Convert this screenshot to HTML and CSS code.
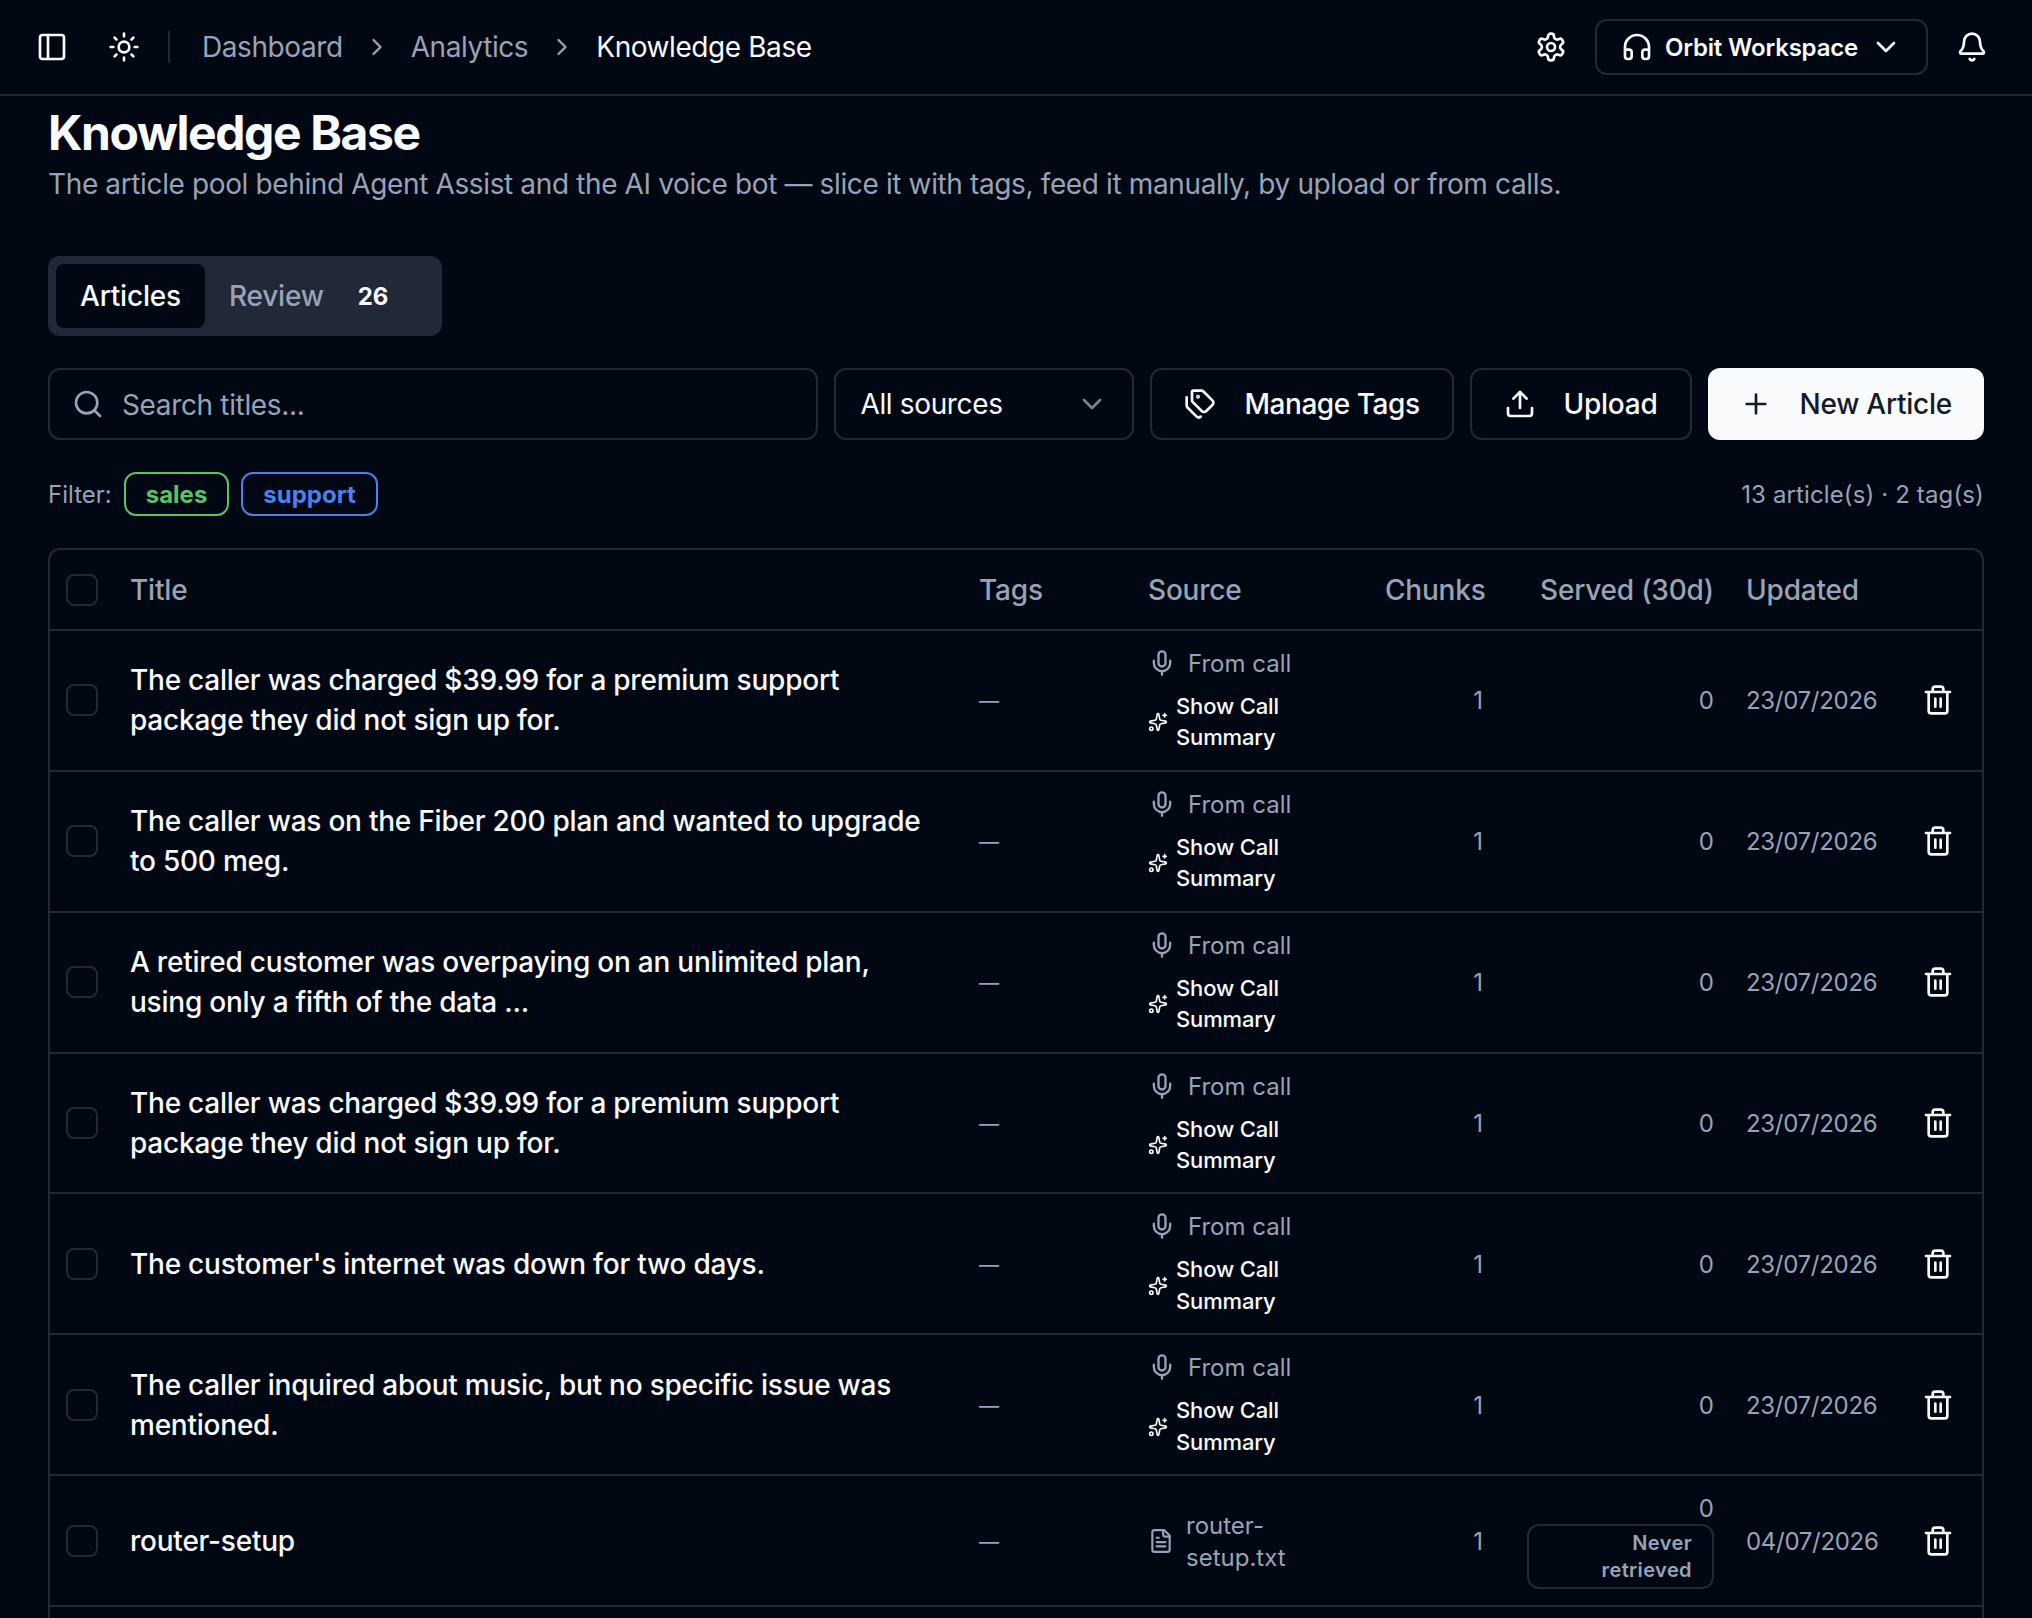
FILE: index.html
```html
<!DOCTYPE html>
<html lang="en">
<head>
    <meta charset="UTF-8">
    <meta name="viewport" content="width=device-width, initial-scale=1.0">
    <title>Knowledge Base</title>
    <link rel="stylesheet" href="styles.css">
</head>
<body>
    <!-- Icon set -->
    <svg class="icon-defs" aria-hidden="true">
        <symbol id="i-panel" viewBox="0 0 24 24"><rect width="18" height="18" x="3" y="3" rx="2"/><path d="M9 3v18"/></symbol>
        <symbol id="i-sun" viewBox="0 0 24 24"><circle cx="12" cy="12" r="4"/><path d="M12 2v2M12 20v2M4.93 4.93l1.41 1.41M17.66 17.66l1.41 1.41M2 12h2M20 12h2M6.34 17.66l-1.41 1.41M19.07 4.93l-1.41 1.41"/></symbol>
        <symbol id="i-chevron-right" viewBox="0 0 24 24"><path d="m9 18 6-6-6-6"/></symbol>
        <symbol id="i-chevron-down" viewBox="0 0 24 24"><path d="m6 9 6 6 6-6"/></symbol>
        <symbol id="i-settings" viewBox="0 0 24 24"><path d="M12.22 2h-.44a2 2 0 0 0-2 2v.18a2 2 0 0 1-1 1.73l-.43.25a2 2 0 0 1-2 0l-.15-.08a2 2 0 0 0-2.73.73l-.22.38a2 2 0 0 0 .73 2.73l.15.1a2 2 0 0 1 1 1.72v.51a2 2 0 0 1-1 1.74l-.15.09a2 2 0 0 0-.73 2.73l.22.38a2 2 0 0 0 2.73.73l.15-.08a2 2 0 0 1 2 0l.43.25a2 2 0 0 1 1 1.73V20a2 2 0 0 0 2 2h.44a2 2 0 0 0 2-2v-.18a2 2 0 0 1 1-1.73l.43-.25a2 2 0 0 1 2 0l.15.08a2 2 0 0 0 2.73-.73l.22-.39a2 2 0 0 0-.73-2.73l-.15-.08a2 2 0 0 1-1-1.74v-.5a2 2 0 0 1 1-1.74l.15-.09a2 2 0 0 0 .73-2.73l-.22-.38a2 2 0 0 0-2.73-.73l-.15.08a2 2 0 0 1-2 0l-.43-.25a2 2 0 0 1-1-1.73V4a2 2 0 0 0-2-2z"/><circle cx="12" cy="12" r="3"/></symbol>
        <symbol id="i-headphones" viewBox="0 0 24 24"><path d="M3 14h3a2 2 0 0 1 2 2v3a2 2 0 0 1-2 2H5a2 2 0 0 1-2-2v-7a9 9 0 0 1 18 0v7a2 2 0 0 1-2 2h-1a2 2 0 0 1-2-2v-3a2 2 0 0 1 2-2h3"/></symbol>
        <symbol id="i-bell" viewBox="0 0 24 24"><path d="M10.268 21a2 2 0 0 0 3.464 0"/><path d="M3.262 15.326A1 1 0 0 0 4 17h16a1 1 0 0 0 .74-1.673C19.41 13.956 18 12.499 18 8A6 6 0 0 0 6 8c0 4.499-1.411 5.956-2.738 7.326"/></symbol>
        <symbol id="i-search" viewBox="0 0 24 24"><circle cx="11" cy="11" r="8"/><path d="m21 21-4.3-4.3"/></symbol>
        <symbol id="i-tags" viewBox="0 0 24 24"><path d="M13.172 2a2 2 0 0 1 1.414.586l6.71 6.71a2.4 2.4 0 0 1 0 3.408l-4.592 4.592a2.4 2.4 0 0 1-3.408 0l-6.71-6.71A2 2 0 0 1 6 9.172V3a1 1 0 0 1 1-1z"/><path d="M2 7v6.172a2 2 0 0 0 .586 1.414l6.71 6.71a2.4 2.4 0 0 0 3.191.193"/><circle cx="10.5" cy="6.5" r=".5" fill="currentColor"/></symbol>
        <symbol id="i-upload" viewBox="0 0 24 24"><path d="M21 15v4a2 2 0 0 1-2 2H5a2 2 0 0 1-2-2v-4"/><path d="m17 8-5-5-5 5"/><path d="M12 3v12"/></symbol>
        <symbol id="i-plus" viewBox="0 0 24 24"><path d="M5 12h14M12 5v14"/></symbol>
        <symbol id="i-mic" viewBox="0 0 24 24"><path d="M12 2a3 3 0 0 0-3 3v7a3 3 0 0 0 6 0V5a3 3 0 0 0-3-3Z"/><path d="M19 10v2a7 7 0 0 1-14 0v-2"/><path d="M12 19v3"/></symbol>
        <symbol id="i-sparkles" viewBox="0 0 24 24"><path d="M11.017 2.814a1 1 0 0 1 1.966 0l1.051 5.558a2 2 0 0 0 1.594 1.594l5.558 1.051a1 1 0 0 1 0 1.966l-5.558 1.051a2 2 0 0 0-1.594 1.594l-1.051 5.558a1 1 0 0 1-1.966 0l-1.051-5.558a2 2 0 0 0-1.594-1.594l-5.558-1.051a1 1 0 0 1 0-1.966l5.558-1.051a2 2 0 0 0 1.594-1.594z"/><path d="M20 2v4M22 4h-4"/><circle cx="4" cy="20" r="2"/></symbol>
        <symbol id="i-file" viewBox="0 0 24 24"><path d="M15 2H6a2 2 0 0 0-2 2v16a2 2 0 0 0 2 2h12a2 2 0 0 0 2-2V7Z"/><path d="M14 2v4a2 2 0 0 0 2 2h4M10 9H8M16 13H8M16 17H8"/></symbol>
        <symbol id="i-trash" viewBox="0 0 24 24"><path d="M3 6h18M19 6v14a2 2 0 0 1-2 2H7a2 2 0 0 1-2-2V6M8 6V4a2 2 0 0 1 2-2h4a2 2 0 0 1 2 2v2M10 11v6M14 11v6"/></symbol>
    </svg>

    <!-- Top bar -->
    <header class="topbar">
        <div class="topbar-left">
            <svg class="icon"><use href="#i-panel"/></svg>
            <svg class="icon icon-theme"><use href="#i-sun"/></svg>
            <span class="separator"></span>
            <nav class="breadcrumb">
                <a>Dashboard</a>
                <svg class="icon icon-sm"><use href="#i-chevron-right"/></svg>
                <a>Analytics</a>
                <svg class="icon icon-sm"><use href="#i-chevron-right"/></svg>
                <span class="current">Knowledge Base</span>
            </nav>
        </div>
        <div class="topbar-right">
            <svg class="icon"><use href="#i-settings"/></svg>
            <button class="workspace">
                <svg class="icon"><use href="#i-headphones"/></svg>
                <span>Orbit Workspace</span>
                <svg class="icon"><use href="#i-chevron-down"/></svg>
            </button>
            <svg class="icon"><use href="#i-bell"/></svg>
        </div>
    </header>

    <main class="page">
        <h1>Knowledge Base</h1>
        <p class="subtitle">The article pool behind Agent Assist and the AI voice bot — slice it with tags, feed it manually, by upload or from calls.</p>

        <div class="tabs">
            <button class="tab active">Articles</button>
            <button class="tab">Review <span class="count">26</span></button>
        </div>

        <!-- Search and actions -->
        <div class="toolbar">
            <label class="search">
                <svg class="icon"><use href="#i-search"/></svg>
                <input type="text" placeholder="Search titles...">
            </label>
            <button class="select">All sources <svg class="icon"><use href="#i-chevron-down"/></svg></button>
            <button class="btn manage"><svg class="icon"><use href="#i-tags"/></svg>Manage Tags</button>
            <button class="btn"><svg class="icon"><use href="#i-upload"/></svg>Upload</button>
            <button class="btn primary"><svg class="icon"><use href="#i-plus"/></svg>New Article</button>
        </div>

        <div class="filters">
            <span class="label">Filter:</span>
            <span class="tag green">sales</span>
            <span class="tag blue">support</span>
            <span class="totals">13 article(s) · 2 tag(s)</span>
        </div>

        <!-- Articles table -->
        <div class="table" id="table">
            <div class="row head">
                <div><span class="checkbox"></span></div>
                <div>Title</div>
                <div>Tags</div>
                <div>Source</div>
                <div class="right">Chunks</div>
                <div class="right">Served (30d)</div>
                <div>Updated</div>
                <div></div>
            </div>
        </div>
    </main>

    <script>
        const articles = [
            { title: 'The caller was charged $39.99 for a premium support package they did not sign up for.', date: '23/07/2026' },
            { title: 'The caller was on the Fiber 200 plan and wanted to upgrade to 500 meg.', date: '23/07/2026' },
            { title: 'A retired customer was overpaying on an unlimited plan, using only a fifth of the data ...', date: '23/07/2026' },
            { title: 'The caller was charged $39.99 for a premium support package they did not sign up for.', date: '23/07/2026' },
            { title: "The customer's internet was down for two days.", date: '23/07/2026' },
            { title: 'The caller inquired about music, but no specific issue was mentioned.', date: '23/07/2026' },
            { title: 'router-setup', file: 'router-setup.txt', date: '04/07/2026' }
        ];

        const table = document.getElementById('table');

        function icon(name, cls) {
            return `<svg class="icon ${cls || ''}"><use href="#i-${name}"/></svg>`;
        }

        function source(article) {
            if (article.file) {
                return `<div class="file">${icon('file', 'icon-sm')}<span>${article.file}</span></div>`;
            }
            return `
                <div class="from-call">${icon('mic', 'icon-sm')}<span>From call</span></div>
                <div class="summary">${icon('sparkles', 'icon-xs')}<span>Show Call Summary</span></div>
            `;
        }

        articles.forEach(article => {
            const row = document.createElement('div');
            row.className = 'row';
            row.innerHTML = `
                <div><span class="checkbox"></span></div>
                <div class="title">${article.title}</div>
                <div class="value empty">—</div>
                <div>${source(article)}</div>
                <div class="value right">1</div>
                <div class="right ${article.file ? '' : 'value'}">
                    <div class="served">0</div>
                    ${article.file ? '<div class="never">Never retrieved</div>' : ''}
                </div>
                <div class="value date">${article.date}</div>
                <div class="action">${icon('trash')}</div>
            `;
            table.appendChild(row);
        });
    </script>
</body>
</html>
```

FILE: styles.css
```css
* {
    box-sizing: border-box;
}

body {
    font-family: Inter, "Liberation Sans", sans-serif;
    font-size: 28px;
    line-height: 40px;
    letter-spacing: -0.3px;
    background: #020714;
    color: #f8fafc;
    margin: 0;
    height: 100vh;
    overflow: hidden;
    display: flex;
    flex-direction: column;
}

button {
    font: inherit;
    font-weight: 500;
    letter-spacing: inherit;
    color: inherit;
    background: none;
    border: none;
    margin: 0;
    padding: 0;
    white-space: nowrap;
}

.icon-defs {
    display: none;
}

.icon {
    width: 32px;
    height: 32px;
    display: block;
    flex-shrink: 0;
    fill: none;
    stroke: currentColor;
    stroke-width: 2;
    stroke-linecap: round;
    stroke-linejoin: round;
}

.icon-sm {
    width: 28px;
    height: 28px;
}

.icon-xs {
    width: 20px;
    height: 20px;
}

/* Top bar */
.topbar {
    flex-shrink: 0;
    height: 96px;
    padding: 0 44px 0 36px;
    border-bottom: 2px solid #212939;
    display: flex;
    justify-content: space-between;
    align-items: center;
}

.topbar-left,
.topbar-right,
.breadcrumb {
    display: flex;
    align-items: center;
}

.icon-theme {
    margin-left: 40px;
}

.separator {
    width: 2px;
    height: 32px;
    margin: 0 32px 0 28px;
    background: #212939;
}

.breadcrumb {
    gap: 20px;
    letter-spacing: -0.42px;
    color: #98a3b6;
}

.breadcrumb .current {
    color: #f8fafc;
}

.topbar-right {
    gap: 28px;
}

.workspace {
    height: 56px;
    padding: 0 24px;
    border: 2px solid #212939;
    border-radius: 12px;
    font-size: 24px;
    font-weight: 600;
    letter-spacing: -0.2px;
    display: flex;
    align-items: center;
    gap: 12px;
}

.workspace span {
    padding-top: 2px;
}

/* Page */
.page {
    padding: 5px 48px 0;
    display: flex;
    flex-direction: column;
}

h1 {
    margin: 0;
    font-size: 48px;
    line-height: 64px;
    font-weight: 700;
    letter-spacing: -1.4px;
}

.subtitle {
    margin: -1px 0 0;
    letter-spacing: -0.37px;
    color: #98a3b6;
}

.tabs {
    align-self: flex-start;
    margin-top: 52px;
    padding: 8px;
    border-radius: 12px;
    background: #212939;
    display: flex;
}

.tab {
    height: 64px;
    padding: 0 24px;
    border-radius: 8px;
    letter-spacing: -0.2px;
    color: #98a3b6;
    display: flex;
    align-items: center;
}

.tab.active {
    background: #020714;
    color: #f8fafc;
}

.tab .count {
    margin-left: 12px;
    padding: 2px 22px 0;
    font-size: 24px;
    font-weight: 700;
    color: #f8fafc;
}

.toolbar {
    margin-top: 32px;
    display: flex;
    gap: 16px;
}

.search,
.select,
.btn {
    height: 72px;
    border: 2px solid #212939;
    border-radius: 12px;
    display: flex;
    align-items: center;
}

.search {
    flex: 1;
    padding: 0 22px;
    gap: 18px;
    color: #98a3b6;
}

.search input {
    flex: 1;
    min-width: 0;
    padding: 2px 0 0;
    border: none;
    outline: none;
    background: none;
    font: inherit;
    letter-spacing: -0.35px;
    color: #f8fafc;
}

.search input::placeholder {
    color: #98a3b6;
}

.select {
    width: 300px;
    padding: 0 24px;
    font-weight: 400;
    letter-spacing: -0.35px;
    justify-content: space-between;
}

.select .icon {
    opacity: 0.5;
}

.btn {
    padding: 0 32px;
    gap: 28px;
    letter-spacing: -0.25px;
}

.btn.manage {
    letter-spacing: -0.45px;
}

.btn.primary {
    border: none;
    background: #f8fafc;
    color: #131a2a;
}

.filters {
    margin-top: 32px;
    display: flex;
    align-items: center;
    gap: 12px;
    font-size: 24px;
    line-height: 32px;
    letter-spacing: 0.13px;
    color: #98a3b6;
}

.filters .label,
.filters .totals {
    padding-top: 2px;
}

.filters .label {
    letter-spacing: 0;
}

.tag {
    height: 44px;
    padding: 5px 20px 3px;
    border: 2px solid currentColor;
    border-radius: 12px;
    font-weight: 650;
    letter-spacing: 0;
}

.tag.green {
    color: #5bc266;
}

.tag.blue {
    color: #4c80ee;
}

.totals {
    margin-left: auto;
}

/* Articles table */
.table {
    margin-top: 32px;
    border: 2px solid #212939;
    border-bottom: none;
    border-radius: 12px 12px 0 0;
    height: 1070px;
    font-size: 24px;
    line-height: 32px;
    letter-spacing: 0;
    color: #98a3b6;
}

.row {
    display: grid;
    grid-template-columns: 64px 849px 169px 237px 130px 231px 170px 1fr;
    align-items: center;
    padding: 16px 0;
    border-bottom: 2px solid #212939;
}

.row > div {
    padding: 0 16px;
}

.row > .value {
    padding-top: 2px;
}

.row > .empty {
    font-size: 20px;
}

.row > .date {
    letter-spacing: -0.3px;
}

.row.head {
    height: 81px;
    font-size: 28px;
    line-height: 40px;
    font-weight: 500;
    letter-spacing: -0.2px;
}

.right {
    text-align: right;
}

.checkbox {
    display: block;
    width: 32px;
    height: 32px;
    border: 2px solid #212939;
    border-radius: 8px;
}

.title {
    font-size: 28px;
    line-height: 40px;
    font-weight: 500;
    letter-spacing: -0.23px;
    color: #f8fafc;
}

.row > .title {
    padding-right: 40px;
}

.from-call,
.file {
    display: flex;
    align-items: center;
    gap: 12px;
}

.from-call span {
    padding-top: 2px;
    line-height: 30px;
}

.file {
    max-width: 160px;
}

.file .icon {
    width: 26px;
}

.file span {
    padding-top: 2px;
}

.summary {
    max-width: 160px;
    margin-top: 12px;
    display: flex;
    align-items: center;
    gap: 8px;
    font-size: 22px;
    line-height: 31.42px;
    letter-spacing: -0.15px;
    font-weight: 500;
    color: #f8fafc;
}

.never {
    margin-left: 12px;
    padding: 4px 20px;
    border: 2px solid #212939;
    border-radius: 12px;
    font-size: 20px;
    line-height: 26.5px;
    letter-spacing: 0.4px;
    font-weight: 600;
}

.served:not(:last-child) {
    padding-top: 2px;
    line-height: 30px;
}

.action {
    color: #f8fafc;
}

.row > .action {
    padding-left: 22px;
}
```
